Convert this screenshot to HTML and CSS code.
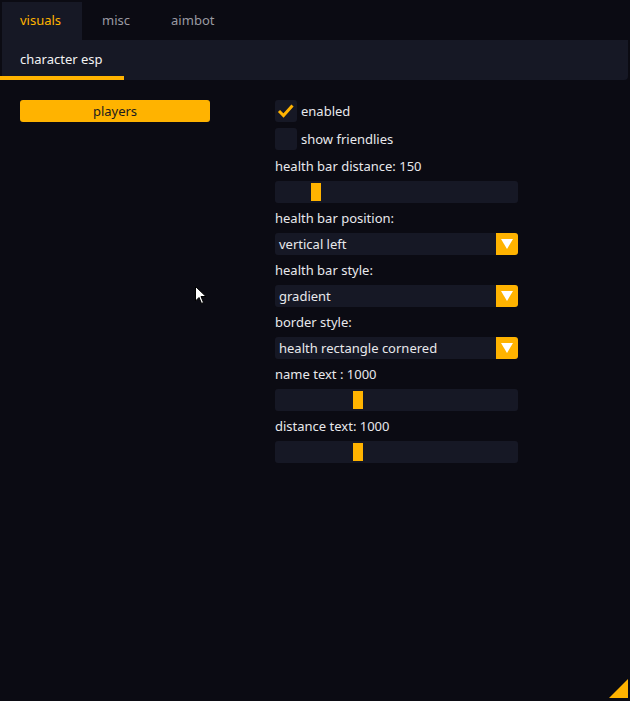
FILE: index.html
```html
<!DOCTYPE html>
<html lang="en">
<head>
  <meta charset="UTF-8">
  <title>menu</title>
  <link rel="stylesheet" href="styles.css">
</head>
<body>
  <div class="window">
    <div class="tabs">
      <div class="tab active">visuals</div>
      <div class="tab">misc</div>
      <div class="tab">aimbot</div>
    </div>
    <div class="subtabs">
      <div class="subtab active">character esp</div>
    </div>

    <div class="content">
      <div class="left">
        <button class="btn">players</button>
      </div>
      <div class="right">
        <div class="check first">
          <span class="box">
            <svg width="18" height="16" viewBox="0 0 18 16"><path d="M2 8 L6.5 12.5 L15.5 2.5" fill="none" stroke="#ffb300" stroke-width="3"/></svg>
          </span>
          enabled
        </div>
        <div class="check second">
          <span class="box"></span>
          show friendlies
        </div>

        <div class="label">health bar distance: 150</div>
        <div class="slider"><span class="grab" style="left: 36px"></span></div>

        <div class="label">health bar position:</div>
        <div class="combo"><span>vertical left</span><span class="arrow"></span></div>

        <div class="label">health bar style:</div>
        <div class="combo"><span>gradient</span><span class="arrow"></span></div>

        <div class="label">border style:</div>
        <div class="combo"><span>health rectangle cornered</span><span class="arrow"></span></div>

        <div class="label">name text : 1000</div>
        <div class="slider"><span class="grab" style="left: 78px"></span></div>

        <div class="label">distance text: 1000</div>
        <div class="slider"><span class="grab" style="left: 78px"></span></div>
      </div>
    </div>

    <div class="grip"></div>
  </div>

  <svg class="cursor" width="12" height="19" viewBox="0 0 12 19">
    <path d="M0.5 0.5 V15 L4 11.5 L6.5 17.5 L8.5 16.5 L6 10.5 H11 Z" fill="#fff" stroke="#000" stroke-width="1"/>
  </svg>
</body>
</html>
```

FILE: styles.css
```css
body {
  margin: 0;
  background-color: #0b0b13;
  font-family: "Noto Sans", sans-serif;
  font-size: 13px;
  color: #e8e8ec;
}

.window {
  position: relative;
  width: 630px;
  height: 701px;
  padding-top: 2px;
  box-sizing: border-box;
}

.tabs {
  display: flex;
  height: 38px;
  padding-left: 2px;
}

.tab {
  padding: 0 21px 0 18px;
  line-height: 37px;
  color: #9a9aa2;
}

.tab + .tab {
  padding: 0 21px 0 20px;
}

.tab.active {
  background-color: #161825;
  color: #ffb300;
}

.subtabs {
  display: flex;
  height: 40px;
  margin: 0 2px 0 2px;
  background-color: #161825;
  border-radius: 0 0 4px 0;
}

.subtab {
  position: relative;
  width: 122px;
  padding-left: 18px;
  box-sizing: border-box;
  line-height: 39px;
  color: #f2f2f4;
}

.subtab.active::after {
  content: "";
  position: absolute;
  left: -2px;
  right: 0;
  bottom: 0;
  height: 4px;
  background-color: #ffb300;
}

.content {
  display: flex;
  padding-top: 20px;
}

.left {
  width: 190px;
  margin-left: 20px;
}

.btn {
  width: 190px;
  height: 22px;
  padding: 0;
  border: none;
  border-radius: 3px;
  background-color: #ffb300;
  color: #1b1b1f;
  font-family: "Noto Sans", sans-serif;
  font-size: 13px;
}

.right {
  display: flex;
  flex-direction: column;
  gap: 4px;
  width: 243px;
  margin-left: 65px;
}

.check {
  display: flex;
  align-items: center;
  gap: 4px;
  height: 22px;
}

.check.first {
  margin-bottom: 2px;
}

.check.second {
  margin-bottom: 1px;
}

.box {
  display: flex;
  align-items: center;
  justify-content: center;
  width: 22px;
  height: 22px;
  border-radius: 3px;
  background-color: #161825;
}

.label {
  height: 22px;
  line-height: 22px;
}

.slider {
  position: relative;
  height: 22px;
  border-radius: 3px;
  background-color: #161825;
}

.grab {
  position: absolute;
  top: 2px;
  width: 10px;
  height: 18px;
  background-color: #ffb300;
}

.combo {
  display: flex;
  align-items: center;
  justify-content: space-between;
  height: 22px;
  padding-left: 4px;
  border-radius: 3px;
  background-color: #161825;
}

.arrow {
  position: relative;
  width: 22px;
  height: 22px;
  border-radius: 0 3px 3px 0;
  background-color: #ffb300;
}

.arrow::after {
  content: "";
  position: absolute;
  left: 5px;
  top: 6px;
  border-left: 6px solid transparent;
  border-right: 6px solid transparent;
  border-top: 10px solid #fff;
}

.grip {
  position: absolute;
  right: 2px;
  bottom: 3px;
  width: 0;
  height: 0;
  border-left: 19px solid transparent;
  border-bottom: 19px solid #ffb300;
}

.cursor {
  position: absolute;
  left: 195px;
  top: 286px;
}
```
